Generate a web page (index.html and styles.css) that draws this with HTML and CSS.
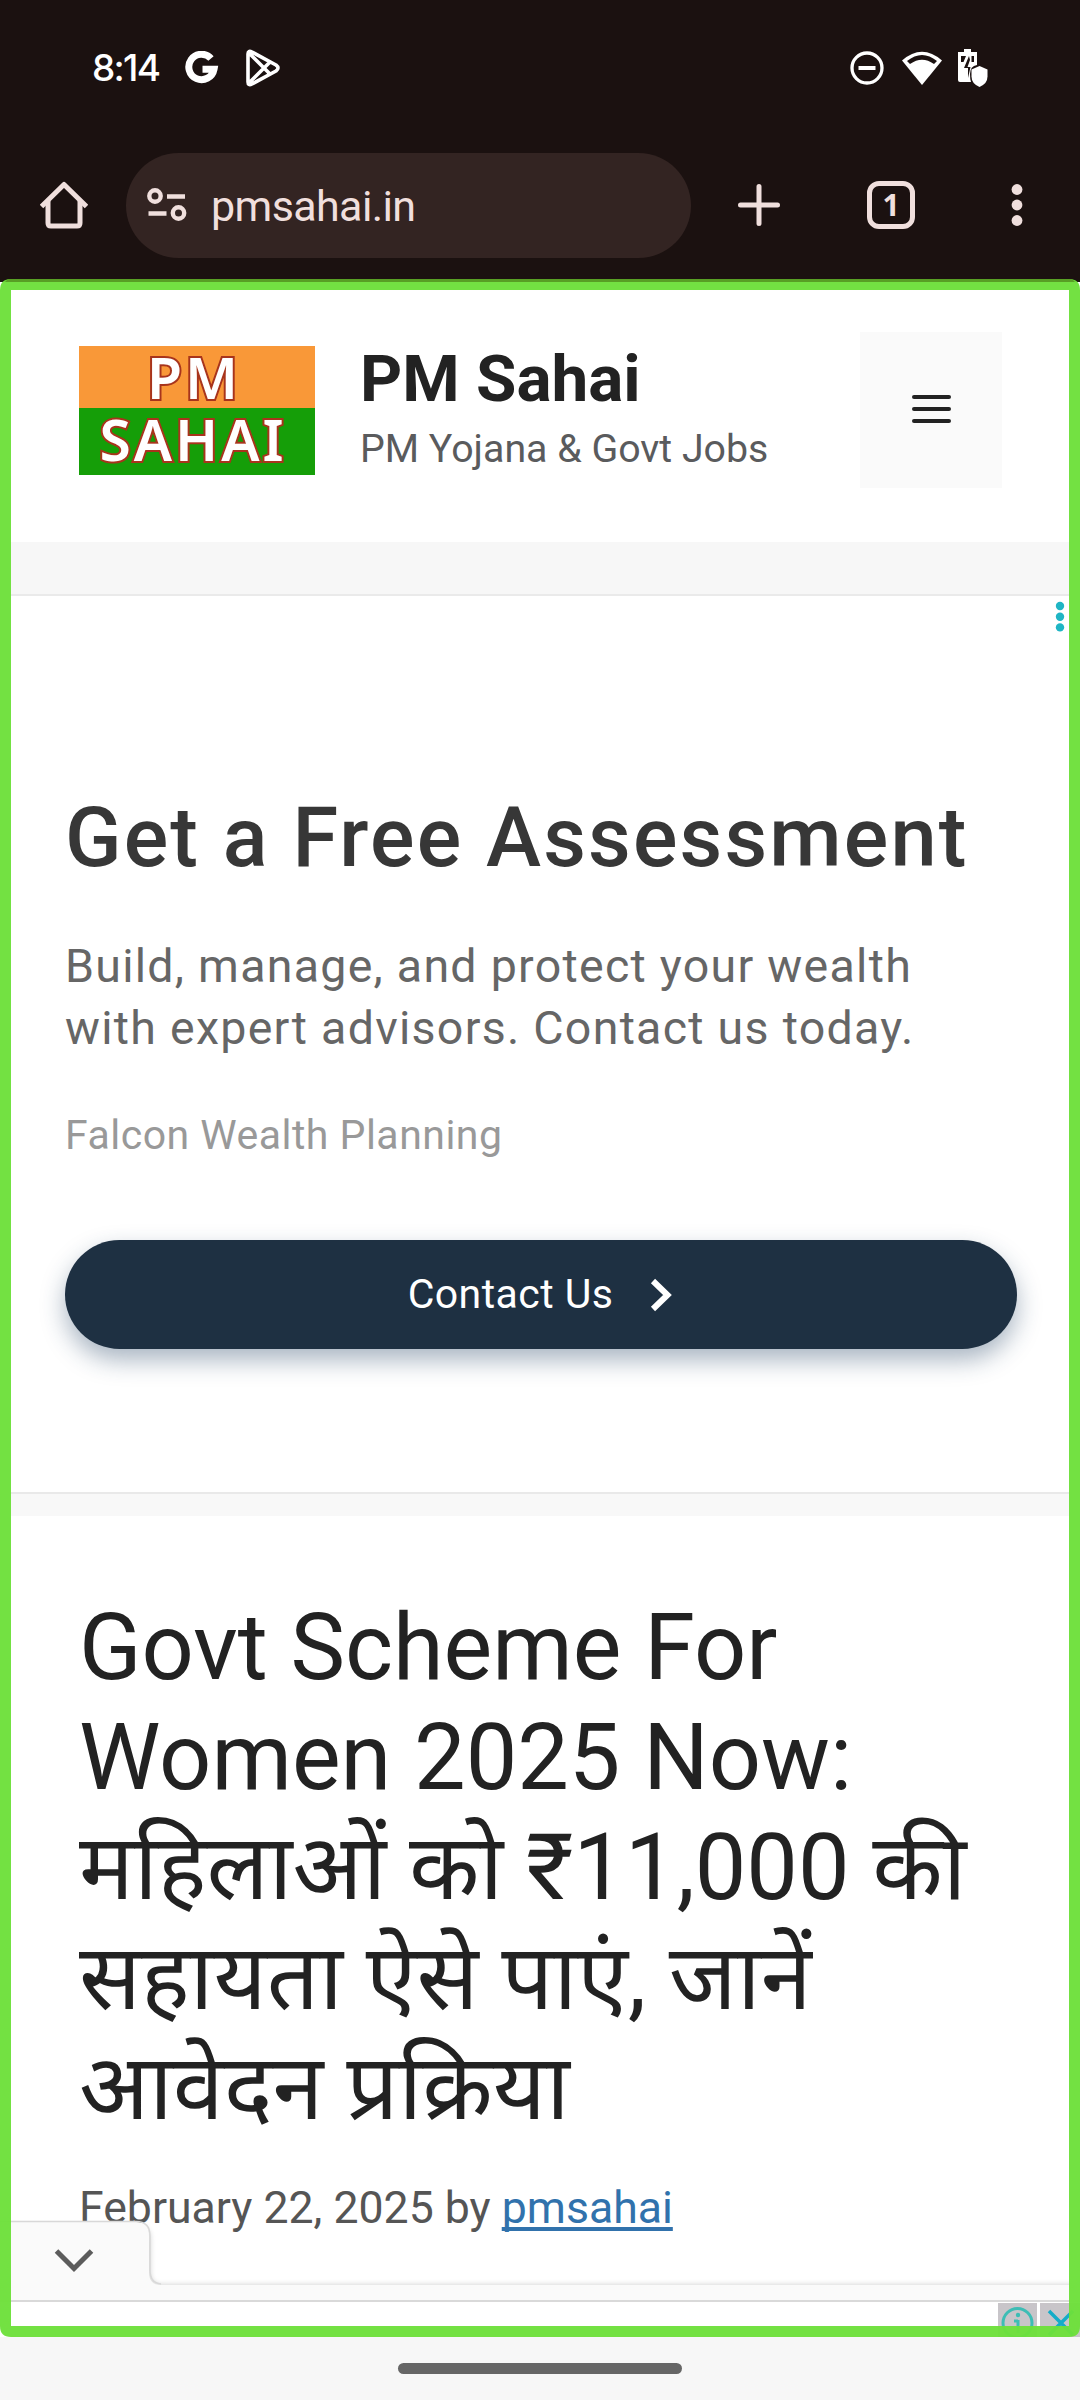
FILE: index.html
```html
<!DOCTYPE html>
<html lang="en">
<head>
<meta charset="utf-8">
<title>PM Sahai</title>
<link rel="stylesheet" href="styles.css">
</head>
<body>
<div class="phone">
  <div class="status">
    <span class="time">8:14</span>
    <svg class="google" width="34" height="34" viewBox="0 0 34 34"><path d="M26 7.500A12.700 12.700 0 1 0 29 18.300H17.500" fill="none" stroke="#fff" stroke-width="7"/></svg>
    <svg class="play" width="36" height="38" viewBox="0 0 36 38" fill="none" stroke="#fff" stroke-width="3.600" stroke-linejoin="round"><path d="M3 5Q3 1 7 3L31 16Q35 19 31 22L7 35Q3 37 3 33ZM3.500 3.500 25 25M3.500 34.500 25 13"/></svg>
    <span class="spring"></span>
    <svg class="dnd" width="34" height="34" viewBox="0 0 34 34" fill="none" stroke="#fff"><circle cx="17" cy="17" r="15" stroke-width="3.300"/><path d="M8.500 17h17" stroke-width="4"/></svg>
    <svg class="wifi" width="40" height="34" viewBox="0 0 40 34"><path d="M0 9.500Q20-8 40 9.500L20 34Z" fill="#fff"/><path d="M5 10Q20-2 35 10L32 13Q20 4.500 8 13Z" fill="#1b1110"/></svg>
    <svg class="battery" width="32" height="40" viewBox="0 0 32 40"><path d="M7 1h7v3h6v13q-7 1-7 9 0 5 1 8H3Q1 34 1 32V4h6Z" fill="#fff"/><path d="M4 8h5l-2.500 6H4ZM14.500 8h2.500v6h-2.500ZM12 8 7 20h4v10l2.500-11h-3l2.500-7Z" fill="#1b1110"/><path d="M22.500 18l8 3.500v7q0 7-8 10.500-8-3.500-8-10.500v-7Z" fill="#fff"/></svg>
  </div>
  <div class="toolbar">
    <svg class="home" width="48" height="48" viewBox="0 0 48 48" fill="none" stroke="#f0dfdd" stroke-width="5" stroke-linejoin="round"><path d="M1.500 25.500 24 3.500 46.500 25.500"/><path d="M8 20V42Q8 45 11 45H37Q40 45 40 42V20" /></svg>
    <div class="omnibox">
      <svg width="40" height="34" viewBox="0 0 40 34" fill="none" stroke="#f0dfdd" stroke-width="4.400"><circle cx="8" cy="8" r="5.700"/><path d="M20 8.500h18M1.500 25.500h18"/><circle cx="31.500" cy="25" r="5.700"/></svg>
      <span class="url">pmsahai.in</span>
    </div>
    <svg class="plus" width="44" height="44" viewBox="0 0 44 44" stroke="#f0dfdd" stroke-width="5" stroke-linecap="round"><path d="M22 3.500v37M3.500 22h37"/></svg>
    <div class="tabs">1</div>
    <svg class="more" width="12" height="44" viewBox="0 0 12 44" fill="#f0dfdd"><circle cx="6" cy="6.500" r="5.400"/><circle cx="6" cy="22" r="5.400"/><circle cx="6" cy="37.500" r="5.400"/></svg>
  </div>
  <main class="page">
    <header class="site">
      <div class="logo"><div class="saffron">PM</div><div class="green">SAHAI</div></div>
      <div class="brand"><div class="name">PM Sahai</div><div class="tagline">PM Yojana &amp; Govt Jobs</div></div>
      <div class="menu"><i></i><i></i><i></i></div>
    </header>
    <section class="ad">
      <svg class="admore" width="10" height="32" viewBox="0 0 10 32" fill="#1fb5c4"><circle cx="5" cy="5" r="4.200"/><circle cx="5" cy="15.700" r="4.200"/><circle cx="5" cy="26.400" r="4.200"/></svg>
      <h2>Get a Free Assessment</h2>
      <p class="copy">Build, manage, and protect your wealth<br>with expert advisors. Contact us today.</p>
      <p class="advertiser">Falcon Wealth Planning</p>
      <div class="cta"><span>Contact Us</span><svg width="24" height="34" viewBox="0 0 24 34" fill="none" stroke="#fff" stroke-width="6"><path d="M3 3 17.500 17 3 31"/></svg></div>
    </section>
    <article class="post">
      <h1>Govt Scheme For<br>Women 2025 Now:<br>महिलाओं को ₹11,000 की<br>सहायता ऐसे पाएं, जानें<br>आवेदन प्रक्रिया</h1>
      <p class="meta">February 22, 2025 by <a>pmsahai</a></p>
    </article>
    <div class="anchor">
      <svg class="handle" width="1080" height="81" viewBox="0 0 1080 81">
        <defs><filter id="soft" x="-5%" y="-20%" width="110%" height="150%"><feGaussianBlur stdDeviation="2.500"/></filter></defs>
        <path d="M0 6H137Q151 6 151 20V53Q151 65 161 65H1080V81H0Z" fill="#000" opacity=".15" filter="url(#soft)"/>
        <path d="M0 3H136Q149 3 149 17V53Q149 66 161 66H1080V81H0Z" fill="#fafafa"/>
        <path d="M0 2.500H136Q150 2.500 150 17V51Q150 64 161 65" fill="none" stroke="#d8d8d8" stroke-width="1.500"/>
        <path d="M56.500 32 74 49.500 91.500 32" fill="none" stroke="#5c5c5c" stroke-width="5"/>
      </svg>
      <div class="slot">
        <svg width="82" height="36" viewBox="0 0 82 36"><path d="M0 1h39v35H0ZM42 1h40v35H42Z" fill="#c8c5c9"/><g fill="none" stroke="#3dbdb5" stroke-width="3"><circle cx="19.500" cy="21" r="14.500"/><path d="M20 18v13M16 19h4"/></g><circle cx="20" cy="13" r="2.200" fill="#3dbdb5"/><path d="m51 9 24 24M75 9 51 33" stroke="#14acc8" stroke-width="3.500"/></svg>
      </div>
    </div>
  </main>
  <div class="gesture"><i></i></div>
  <svg class="frame" width="1080" height="2060" viewBox="0 0 1080 2060"><path fill="#6de03a" fill-opacity=".96" fill-rule="evenodd" d="M11 0H1069Q1080 0 1080 11V2047Q1080 2058 1069 2058H11Q0 2058 0 2047V11Q0 0 11 0ZM11 11V2047H1069V11Z"/><path d="M8 0H1072L1075 3H5Z" fill="#589f24"/></svg>
</div>
</body>
</html>
```
FILE: styles.css
```css
* { box-sizing: border-box; }
body { margin: 0; font-family: Roboto, "Noto Sans", "Noto Sans Devanagari", sans-serif; }
h1, h2, p { margin: 0; font-weight: 400; }
svg { display: block; flex: none; }
.phone { position: relative; width: 1080px; height: 2400px; display: flex; flex-direction: column; overflow: hidden; background: #f7f7f7; }
.status { height: 136px; background: #1b1110; display: flex; align-items: center; padding: 0 91px 0 92px; color: #fff; }
.time { width: 93px; font: 500 37px/40px Inter, sans-serif; letter-spacing: -1.700px; }
.play { margin-left: 26px; }
.spring { flex: 1; }
.wifi { margin: 0 15px 0 18px; }
.toolbar { height: 146px; background: #1b1110; display: flex; align-items: center; padding: 0 57px 8px 40px; }
.omnibox { margin-left: 38px; width: 565px; height: 105px; border-radius: 53px; background: #332422; display: flex; align-items: center; padding-left: 21px; }
.url { margin: 2px 0 0 24px; font-size: 43px; line-height: 50px; letter-spacing: -0.600px; color: #f0dfdd; }
.plus { margin-left: 46px; }
.tabs { margin-left: 86px; width: 48px; height: 48px; border: 5px solid #f0dfdd; border-radius: 12px; color: #f0dfdd; font: 700 30px/38px "Noto Sans", sans-serif; text-align: center; }
.more { margin-left: auto; }
.page { position: relative; height: 2055px; background: #fff; overflow: hidden; flex: none; }
.site { height: 260px; display: flex; align-items: center; padding: 0 78px 4px 79px; }
.logo { width: 236px; height: 129px; font: 600 57px/62px "Noto Sans", sans-serif; color: #fff; text-align: center; -webkit-text-stroke: 4px #a8341c; paint-order: stroke fill; letter-spacing: 3px; }
.saffron { height: 62px; background: #f99838; padding-right: 6px; }
.green { height: 67px; background: #159e08; padding-right: 8px; }
.brand { margin: -3px 0 0 45px; color: #222; }
.name { font-size: 65.600px; font-weight: 700; line-height: 81px; }
.tagline { font-size: 39.300px; line-height: 60px; color: #5a5b5d; }
.menu { margin-left: auto; width: 142px; height: 156px; background: #fafafa; display: flex; flex-direction: column; align-items: center; justify-content: center; gap: 8.300px; padding-bottom: 2px; }
.menu i { width: 39px; height: 4px; border-radius: 2px; background: #222; }
.ad { position: relative; height: 952px; border-top: 52px solid #f7f7f7; border-bottom: 2px solid #e9e9e9; padding: 194px 63px 0 65px; }
.ad::before { content: ""; position: absolute; left: 0; right: 0; top: 0; height: 2px; background: #eaeaea; }
.admore { position: absolute; right: 15px; top: 7px; }
.ad h2 { font-size: 83px; line-height: 100px; font-weight: 500; color: #373737; letter-spacing: 2.150px; white-space: nowrap; }
.copy { margin-top: 48px; font-size: 46.500px; line-height: 61.500px; letter-spacing: 1.280px; color: #666; white-space: nowrap; }
.advertiser { margin-top: 52px; font-size: 41px; line-height: 48px; letter-spacing: .480px; color: #999; }
.cta { margin-top: 81px; height: 109px; border-radius: 55px; background: #1e3042; color: #fff; font-size: 41px; letter-spacing: .450px; display: flex; align-items: center; justify-content: center; gap: 37px; box-shadow: 0 11px 24px rgba(30, 60, 95, .38); }
.cta span { margin-top: -2px; }
.post { border-top: 22px solid #f8f8f8; padding: 77px 79px 0; }
.post h1 { font-size: 91.800px; line-height: 110px; color: #222; white-space: nowrap; }
.meta { margin-top: 32px; font-size: 44.600px; line-height: 66px; color: #555; }
.meta a { color: #3172ac; text-decoration: underline; text-decoration-thickness: 4px; text-underline-offset: 4px; text-decoration-skip-ink: none; }
.anchor { position: absolute; left: 0; right: 0; bottom: 0; }
.slot { height: 37px; border-top: 2px solid #d9d9d9; background: #fff; display: flex; justify-content: flex-end; }
.gesture { flex: 1; background: #f7f7f7; display: flex; justify-content: center; padding-top: 26px; }
.gesture i { width: 284px; height: 11px; border-radius: 6px; background: #666; }
.frame { position: absolute; left: 0; top: 279px; }
```
